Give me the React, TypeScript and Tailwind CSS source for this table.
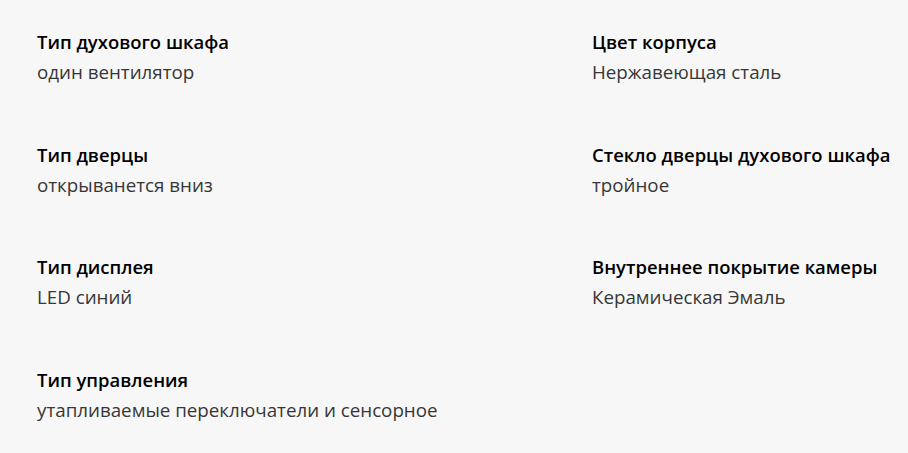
import React from 'react';

interface Spec {
  label: string;
  value: string;
}

const specs: Spec[] = [
  { label: 'Тип духового шкафа', value: 'один вентилятор' },
  { label: 'Цвет корпуса', value: 'Нержавеющая сталь' },
  { label: 'Тип дверцы', value: 'открыванется вниз' },
  { label: 'Стекло дверцы духового шкафа', value: 'тройное' },
  { label: 'Тип дисплея', value: 'LED синий' },
  { label: 'Внутреннее покрытие камеры', value: 'Керамическая Эмаль' },
  { label: 'Тип управления', value: 'утапливаемые переключатели и сенсорное' },
];

export default function App() {
  return (
    <div className="min-h-[453px] w-full bg-[#f7f7f7] pl-[37px] pt-[27px] font-['Open_Sans',sans-serif]">
      <div className="grid grid-cols-[555px_1fr] gap-y-[52.5px]">
        {specs.map((s) => (
          <div key={s.label} className="flex flex-col">
            <div className="text-[18.45px] leading-[30px] font-semibold text-black">{s.label}</div>
            <div className="text-[18.75px] leading-[30px] text-[#363636]">{s.value}</div>
          </div>
        ))}
      </div>
    </div>
  );
}
